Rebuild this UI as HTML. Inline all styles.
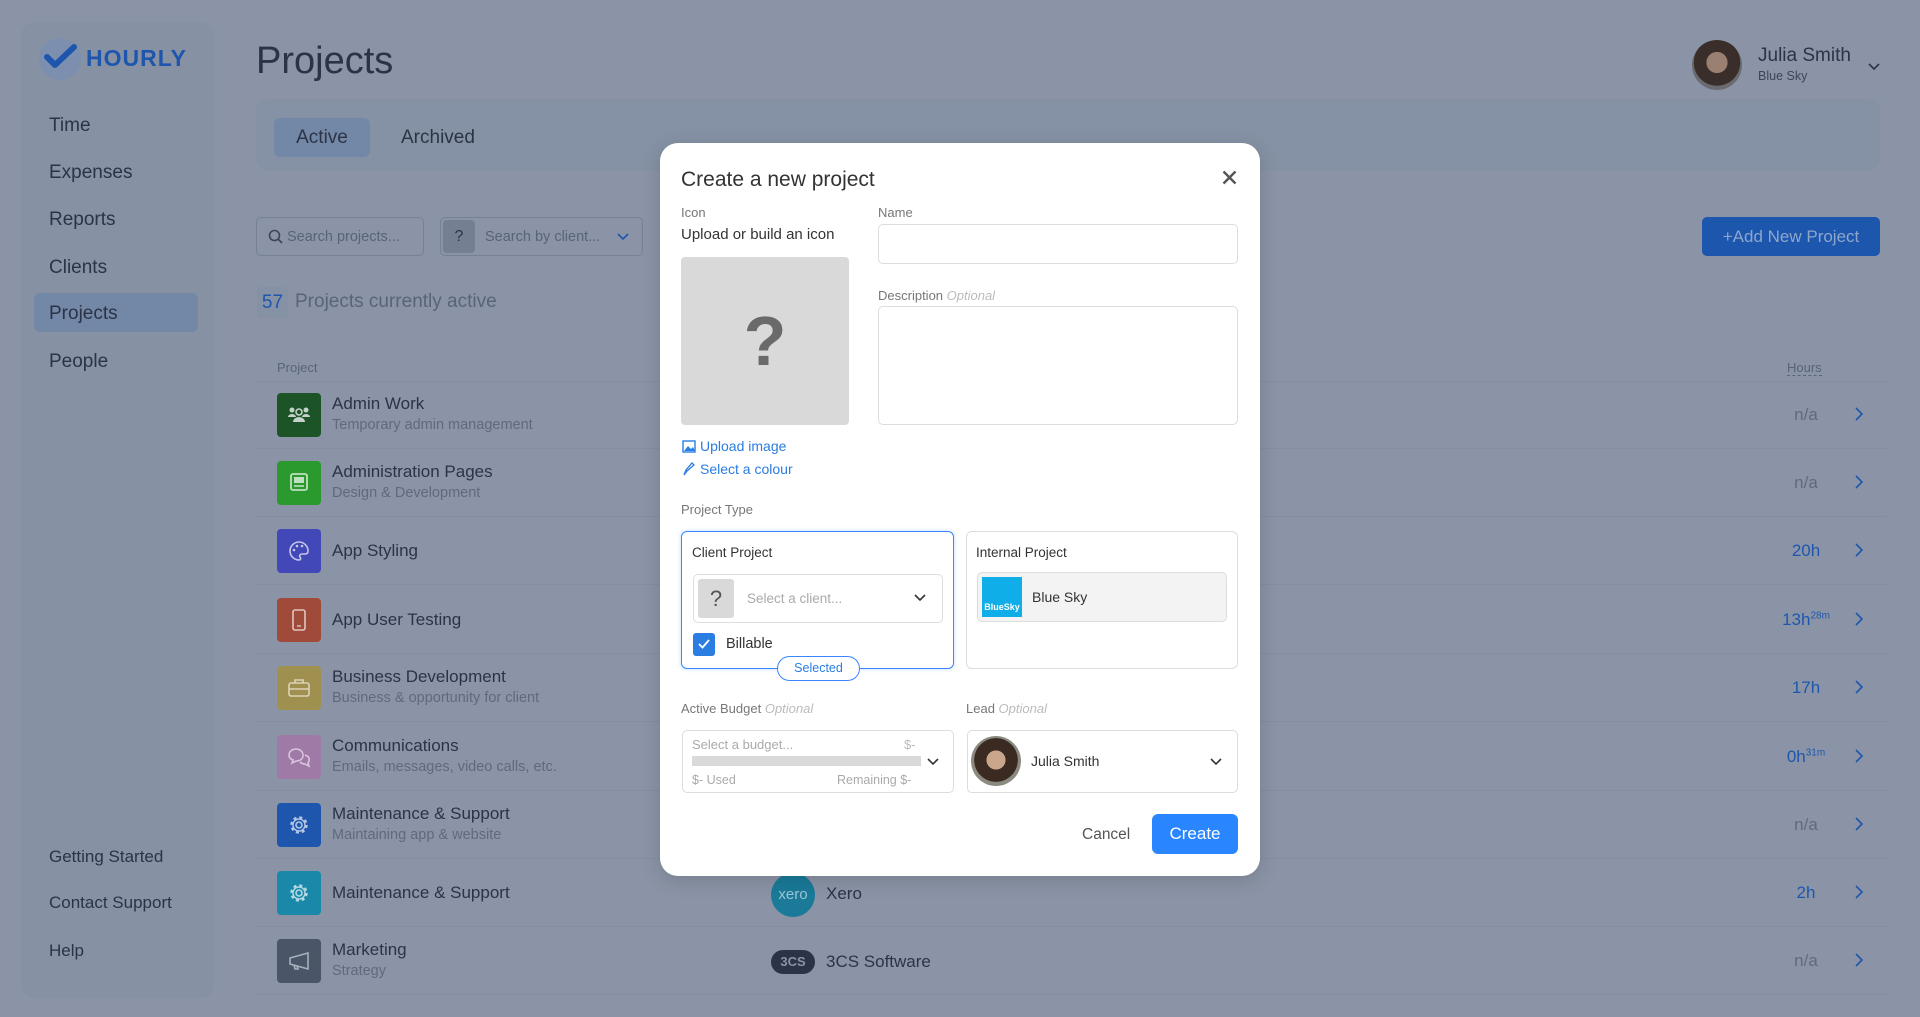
<!DOCTYPE html>
<html><head><meta charset="utf-8"><style>
*{box-sizing:border-box;margin:0;padding:0}
body{width:1920px;height:1017px;overflow:hidden;background:#8a94a6;font-family:"Liberation Sans",sans-serif;position:relative;color:#2b3446}
.a{position:absolute}
.nav{position:absolute;left:49px;font-size:19px;color:#2b3446;transform:translateY(-50%);margin-top:2px}
.row{position:absolute;left:256px;width:1630px;height:68px;border-bottom:1px solid #848ea1}
.ic{position:absolute;left:21px;top:12px;width:44px;height:44px;border-radius:4px;display:flex;align-items:center;justify-content:center}
.t1{position:absolute;left:76px;font-size:17px;color:#2b3446}
.t2{position:absolute;left:76px;font-size:14.5px;color:#606a7c}
.hr{position:absolute;right:50px;font-size:17px;width:60px;text-align:center}
.chev{position:absolute;right:22px;top:26px;width:10px;height:14px}
.m{position:absolute;font-size:13px;color:#777}
.box{position:absolute;border:1px solid #ddd;border-radius:5px;background:#fff}
</style></head><body>
<!-- sidebar -->
<div class="a" style="left:21px;top:22px;width:193px;height:976px;background:#8691a4;border-radius:14px"></div>
<div class="a" style="left:39px;top:38px;width:42px;height:42px;border-radius:50%;background:#7c8faf"></div>
<svg class="a" style="left:42px;top:44px" width="38" height="26" viewBox="0 0 38 26"><path d="M5 13 L13 21 L32 3" stroke="#1e56ad" stroke-width="6" fill="none" stroke-linecap="round" stroke-linejoin="round"/></svg>
<div class="a" style="left:86px;top:45px;font-size:23px;font-weight:bold;color:#1e56ad;letter-spacing:1px">HOURLY</div>
<div class="a" style="left:34px;top:293px;width:164px;height:39px;border-radius:6px;background:#7387a6"></div>
<div class="nav" style="top:124px">Time</div>
<div class="nav" style="top:171px">Expenses</div>
<div class="nav" style="top:218px">Reports</div>
<div class="nav" style="top:266px">Clients</div>
<div class="nav" style="top:312px">Projects</div>
<div class="nav" style="top:360px">People</div>
<div class="nav" style="top:855px;font-size:17px">Getting Started</div>
<div class="nav" style="top:901px;font-size:17px">Contact Support</div>
<div class="nav" style="top:949px;font-size:17px">Help</div>
<!-- header -->
<div class="a" style="left:256px;top:40px;font-size:38px;color:#2b3446">Projects</div>
<div class="a" style="left:1692px;top:40px;width:50px;height:50px;border-radius:50%;background:radial-gradient(circle at 50% 45%,#9a8070 0 28%,#3a2e2a 29% 62%,#6b6a70 63%)"></div>
<div class="a" style="left:1758px;top:45px;font-size:19px;color:#2b3446">Julia Smith</div>
<div class="a" style="left:1758px;top:69px;font-size:12.5px;color:#3d4658">Blue Sky</div>
<svg class="a" style="left:1868px;top:63px" width="12" height="8"><path d="M1 1L6 6L11 1" stroke="#2b3446" stroke-width="1.6" fill="none"/></svg>
<div class="a" style="left:256px;top:99px;width:1624px;height:72px;border-radius:12px;background:#8592a5"></div>
<div class="a" style="left:274px;top:118px;width:96px;height:39px;border-radius:6px;background:#7387a6;font-size:19px;text-align:center;line-height:39px">Active</div>
<div class="a" style="left:401px;top:127px;font-size:19px">Archived</div>
<div class="a" style="left:256px;top:217px;width:168px;height:39px;border:1px solid #778195;border-radius:5px"></div>
<svg class="a" style="left:268px;top:229px" width="16" height="16"><circle cx="6.5" cy="6.5" r="5" stroke="#3d4658" stroke-width="1.6" fill="none"/><path d="M10 10L14 14" stroke="#3d4658" stroke-width="1.6"/></svg>
<div class="a" style="left:287px;top:229px;font-size:14.5px;color:#5a6477">Search projects...</div>
<div class="a" style="left:440px;top:217px;width:203px;height:39px;border:1px solid #778195;border-radius:5px"></div>
<div class="a" style="left:443px;top:220px;width:32px;height:33px;border-radius:4px;background:#747f92;text-align:center;line-height:33px;font-size:16px;color:#2b3446">?</div>
<div class="a" style="left:485px;top:229px;font-size:14.5px;color:#5a6477">Search by client...</div>
<svg class="a" style="left:617px;top:233px" width="12" height="8"><path d="M1 1L6 6L11 1" stroke="#1e56ad" stroke-width="1.6" fill="none"/></svg>
<div class="a" style="left:1702px;top:217px;width:178px;height:39px;border-radius:5px;background:#1d56ad;color:#8ea6cc;font-size:17px;text-align:center;line-height:39px">+Add New Project</div>
<div class="a" style="left:257px;top:287px;width:31px;height:31px;border-radius:3px;background:#8592a5;color:#1e56ad;font-size:19px;text-align:center;line-height:31px">57</div>
<div class="a" style="left:295px;top:291px;font-size:19px;color:#5a6477">Projects currently active</div>
<div class="a" style="left:277px;top:360px;font-size:13px;color:#5a6477">Project</div>
<div class="a" style="left:1787px;top:360px;font-size:13px;color:#5a6477;border-bottom:1px dashed #5a6477">Hours</div>
<div class="a" style="left:256px;top:381px;width:1630px;height:1px;background:#848ea1"></div>
<!-- rows -->
<div class="row" style="top:381px"><div class="ic" style="background:#1c5428"><svg width="24" height="20"><circle cx="12" cy="7" r="3" fill="none" stroke="#c6d1cb" stroke-width="1.6"/><circle cx="5" cy="5" r="2.5" fill="#c6d1cb"/><circle cx="19" cy="5" r="2.5" fill="#c6d1cb"/><path d="M6 17a6 5 0 0112 0z M1 12a4 3 0 018 0z M15 12a4 3 0 018 0z" fill="#c6d1cb"/></svg></div><div class="t1" style="top:13px">Admin Work</div><div class="t2" style="top:36px">Temporary admin management</div><div class="hr" style="top:24px;color:#606a7c">n/a</div><svg class="chev" viewBox="0 0 10 14"><path d="M2 1L8 7L2 13" stroke="#1e56ad" stroke-width="1.6" fill="none"/></svg></div>
<div class="row" style="top:449px"><div class="ic" style="background:#2a9a2e"><svg width="20" height="22"><rect x="2" y="2" width="16" height="16" rx="2" fill="none" stroke="#bfe0bf" stroke-width="1.8"/><rect x="5" y="5" width="10" height="6" fill="#bfe0bf"/><path d="M5 14h10" stroke="#bfe0bf" stroke-width="1.6"/></svg></div><div class="t1" style="top:13px">Administration Pages</div><div class="t2" style="top:36px">Design &amp; Development</div><div class="hr" style="top:24px;color:#606a7c">n/a</div><svg class="chev" viewBox="0 0 10 14"><path d="M2 1L8 7L2 13" stroke="#1e56ad" stroke-width="1.6" fill="none"/></svg></div>
<div class="row" style="top:517px"><div class="ic" style="background:#4348b8"><svg width="22" height="22"><path d="M11 2a9 9 0 100 18c2 0 2-2 1-3s0-3 2-3h3c2 0 3-1 3-3A9 9 0 0011 2z" fill="none" stroke="#c4c6e8" stroke-width="1.6"/><circle cx="6" cy="10" r="1.3" fill="#c4c6e8"/><circle cx="9" cy="6" r="1.3" fill="#c4c6e8"/><circle cx="14" cy="6" r="1.3" fill="#c4c6e8"/></svg></div><div class="t1" style="top:24px">App Styling</div><div class="hr" style="top:24px;color:#1e56ad">20h</div><svg class="chev" viewBox="0 0 10 14"><path d="M2 1L8 7L2 13" stroke="#1e56ad" stroke-width="1.6" fill="none"/></svg></div>
<div class="row" style="top:586px"><div class="ic" style="background:#a04a3a"><svg width="16" height="22"><rect x="2" y="1" width="12" height="20" rx="2" fill="none" stroke="#e0c6c0" stroke-width="1.6"/><path d="M6 17h4" stroke="#e0c6c0" stroke-width="1.4"/></svg></div><div class="t1" style="top:24px">App User Testing</div><div class="hr" style="top:24px;color:#1e56ad;right:40px;width:80px">13h<sup style="font-size:10px">28m</sup></div><svg class="chev" viewBox="0 0 10 14"><path d="M2 1L8 7L2 13" stroke="#1e56ad" stroke-width="1.6" fill="none"/></svg></div>
<div class="row" style="top:654px"><div class="ic" style="background:#a09050"><svg width="24" height="20"><rect x="2" y="5" width="20" height="13" rx="2" fill="none" stroke="#ddd3b8" stroke-width="1.6"/><path d="M8 5V2h8v3M2 11h20" stroke="#ddd3b8" stroke-width="1.6" fill="none"/></svg></div><div class="t1" style="top:13px">Business Development</div><div class="t2" style="top:36px">Business &amp; opportunity for client</div><div class="hr" style="top:24px;color:#1e56ad">17h</div><svg class="chev" viewBox="0 0 10 14"><path d="M2 1L8 7L2 13" stroke="#1e56ad" stroke-width="1.6" fill="none"/></svg></div>
<div class="row" style="top:723px"><div class="ic" style="background:#a07aa6"><svg width="26" height="22"><path d="M3 9c0-4 4-6 7-6s7 2 7 6-3 6-7 6l-4 2 1-3C4 13 3 11 3 9z M19 9c3 1 5 3 4 6l-1 2 1 3-4-2c-2 0-4-1-5-2" fill="none" stroke="#d8c4dc" stroke-width="1.6"/></svg></div><div class="t1" style="top:13px">Communications</div><div class="t2" style="top:36px">Emails, messages, video calls, etc.</div><div class="hr" style="top:24px;color:#1e56ad;right:40px;width:80px">0h<sup style="font-size:10px">31m</sup></div><svg class="chev" viewBox="0 0 10 14"><path d="M2 1L8 7L2 13" stroke="#1e56ad" stroke-width="1.6" fill="none"/></svg></div>
<div class="row" style="top:791px"><div class="ic" style="background:#1e56ad"><svg width="22" height="22"><circle cx="11" cy="11" r="3" fill="none" stroke="#b4c6e4" stroke-width="1.6"/><circle cx="11" cy="11" r="7.5" fill="none" stroke="#b4c6e4" stroke-width="2.5" stroke-dasharray="3 2.9"/><circle cx="11" cy="11" r="6" fill="none" stroke="#b4c6e4" stroke-width="1.4"/></svg></div><div class="t1" style="top:13px">Maintenance &amp; Support</div><div class="t2" style="top:36px">Maintaining app &amp; website</div><div class="hr" style="top:24px;color:#606a7c">n/a</div><svg class="chev" viewBox="0 0 10 14"><path d="M2 1L8 7L2 13" stroke="#1e56ad" stroke-width="1.6" fill="none"/></svg></div>
<div class="row" style="top:859px"><div class="ic" style="background:#1a88a8"><svg width="22" height="22"><circle cx="11" cy="11" r="3" fill="none" stroke="#b4d8e4" stroke-width="1.6"/><circle cx="11" cy="11" r="7.5" fill="none" stroke="#b4d8e4" stroke-width="2.5" stroke-dasharray="3 2.9"/><circle cx="11" cy="11" r="6" fill="none" stroke="#b4d8e4" stroke-width="1.4"/></svg></div><div class="t1" style="top:24px">Maintenance &amp; Support</div><div class="a" style="left:515px;top:14px;width:44px;height:44px;border-radius:50%;background:#1a7a98;color:#9cc6d6;font-size:15px;text-align:center;line-height:44px">xero</div><div class="a" style="left:570px;top:25px;font-size:17px">Xero</div><div class="hr" style="top:24px;color:#1e56ad">2h</div><svg class="chev" viewBox="0 0 10 14"><path d="M2 1L8 7L2 13" stroke="#1e56ad" stroke-width="1.6" fill="none"/></svg></div>
<div class="row" style="top:927px"><div class="ic" style="background:#4b5568"><svg width="24" height="20"><path d="M3 7v6l18 5V2z M7 14l1 4h3l-1-3" fill="none" stroke="#a9afbb" stroke-width="1.6"/></svg></div><div class="t1" style="top:13px">Marketing</div><div class="t2" style="top:36px">Strategy</div><div class="a" style="left:515px;top:23px;width:44px;height:24px;border-radius:12px;background:#2b3446;color:#8a94a6;font-size:13px;font-weight:bold;text-align:center;line-height:24px">3CS</div><div class="a" style="left:570px;top:25px;font-size:17px">3CS Software</div><div class="hr" style="top:24px;color:#606a7c">n/a</div><svg class="chev" viewBox="0 0 10 14"><path d="M2 1L8 7L2 13" stroke="#1e56ad" stroke-width="1.6" fill="none"/></svg></div>
<!-- modal -->
<div class="a" style="left:660px;top:143px;width:600px;height:733px;background:#fff;border-radius:18px;box-shadow:0 4px 20px rgba(0,0,0,.15)"></div>
<div class="a" style="left:681px;top:168px;font-size:21px;color:#333">Create a new project</div>
<svg class="a" style="left:1222px;top:170px" width="15" height="15"><path d="M1.5 1.5L13.5 13.5M13.5 1.5L1.5 13.5" stroke="#555" stroke-width="2.4"/></svg>
<div class="m" style="left:681px;top:205px">Icon</div>
<div class="a" style="left:681px;top:226px;font-size:15px;color:#333">Upload or build an icon</div>
<div class="a" style="left:681px;top:257px;width:168px;height:168px;border-radius:4px;background:#d9d9d9;text-align:center;line-height:168px;font-size:70px;font-weight:bold;color:#6a6a6a">?</div>
<div class="m" style="left:878px;top:205px">Name</div>
<div class="box" style="left:878px;top:224px;width:360px;height:40px"></div>
<div class="m" style="left:878px;top:288px">Description <i style="color:#bbb">Optional</i></div>
<div class="box" style="left:878px;top:306px;width:360px;height:119px"></div>
<svg class="a" style="left:682px;top:440px" width="14" height="13"><rect x="1" y="1" width="12" height="11" fill="none" stroke="#2a7de1" stroke-width="1.4"/><path d="M2 11l4-5 3 3 2-2 2 4z" fill="#2a7de1"/></svg>
<div class="a" style="left:700px;top:438px;font-size:14px;color:#2a7de1">Upload image</div>
<svg class="a" style="left:682px;top:462px" width="14" height="14"><path d="M2 13l2-5 6-7 2 2-7 6z" fill="none" stroke="#2a7de1" stroke-width="1.3"/></svg>
<div class="a" style="left:700px;top:461px;font-size:14px;color:#2a7de1">Select a colour</div>
<div class="m" style="left:681px;top:502px">Project Type</div>
<div class="a" style="left:681px;top:531px;width:273px;height:138px;border:1.5px solid #3a86ff;border-radius:6px;box-shadow:0 0 4px rgba(58,134,255,.3)"></div>
<div class="a" style="left:692px;top:545px;font-size:13.5px;color:#333">Client Project</div>
<div class="box" style="left:693px;top:574px;width:250px;height:49px"></div>
<div class="a" style="left:698px;top:579px;width:36px;height:39px;border-radius:3px;background:#d9d9d9;text-align:center;line-height:39px;font-size:22px;color:#555">?</div>
<div class="a" style="left:747px;top:591px;font-size:13.5px;color:#aaa">Select a client...</div>
<svg class="a" style="left:914px;top:594px" width="12" height="8"><path d="M1 1L6 6L11 1" stroke="#333" stroke-width="1.6" fill="none"/></svg>
<div class="a" style="left:693px;top:633px;width:22px;height:23px;border-radius:3px;background:#2a7de1"></div>
<svg class="a" style="left:697px;top:638px" width="14" height="12"><path d="M2 6l3.5 3.5L12 2" stroke="#fff" stroke-width="1.8" fill="none"/></svg>
<div class="a" style="left:726px;top:636px;font-size:14.5px;color:#333">Billable</div>
<div class="a" style="left:777px;top:656px;width:83px;height:25px;border:1.5px solid #3a86ff;border-radius:13px;background:#fff;text-align:center;line-height:22px;font-size:12.5px;color:#2a7de1">Selected</div>
<div class="box" style="left:966px;top:531px;width:272px;height:138px;border-radius:6px"></div>
<div class="a" style="left:976px;top:545px;font-size:13.5px;color:#333">Internal Project</div>
<div class="a" style="left:977px;top:572px;width:250px;height:50px;border:1px solid #ddd;border-radius:5px;background:#f3f3f3"></div>
<div class="a" style="left:982px;top:577px;width:40px;height:40px;background:#10aee8;color:#fff;font-size:9px;font-weight:bold;text-align:center;padding-top:25px">BlueSky</div>
<div class="a" style="left:1032px;top:589px;font-size:14px;color:#333">Blue Sky</div>
<div class="m" style="left:681px;top:701px">Active Budget <i style="color:#bbb">Optional</i></div>
<div class="m" style="left:966px;top:701px">Lead <i style="color:#bbb">Optional</i></div>
<div class="box" style="left:682px;top:730px;width:272px;height:63px"></div>
<div class="a" style="left:692px;top:737px;font-size:13px;color:#aaa">Select a budget...</div>
<div class="a" style="left:904px;top:737px;font-size:13px;color:#bbb">$-</div>
<div class="a" style="left:692px;top:756px;width:229px;height:10px;background:#d9d9d9"></div>
<svg class="a" style="left:927px;top:758px" width="12" height="8"><path d="M1 1L6 6L11 1" stroke="#333" stroke-width="1.6" fill="none"/></svg>
<div class="a" style="left:692px;top:773px;font-size:12.5px;color:#aaa">$- Used</div>
<div class="a" style="left:837px;top:773px;font-size:12.5px;color:#aaa">Remaining $-</div>
<div class="box" style="left:967px;top:730px;width:271px;height:63px"></div>
<div class="a" style="left:971px;top:736px;width:50px;height:50px;border-radius:50%;background:radial-gradient(circle at 50% 48%,#c9a68c 0 26%,#3a2a22 27% 60%,#8a8a80 61%)"></div>
<div class="a" style="left:1031px;top:753px;font-size:14px;color:#333">Julia Smith</div>
<svg class="a" style="left:1210px;top:758px" width="12" height="8"><path d="M1 1L6 6L11 1" stroke="#333" stroke-width="1.6" fill="none"/></svg>
<div class="a" style="left:1082px;top:826px;font-size:15.5px;color:#555">Cancel</div>
<div class="a" style="left:1152px;top:814px;width:86px;height:40px;border-radius:6px;background:#2a86ff;color:#fff;font-size:17px;text-align:center;line-height:40px">Create</div>
</body></html>
